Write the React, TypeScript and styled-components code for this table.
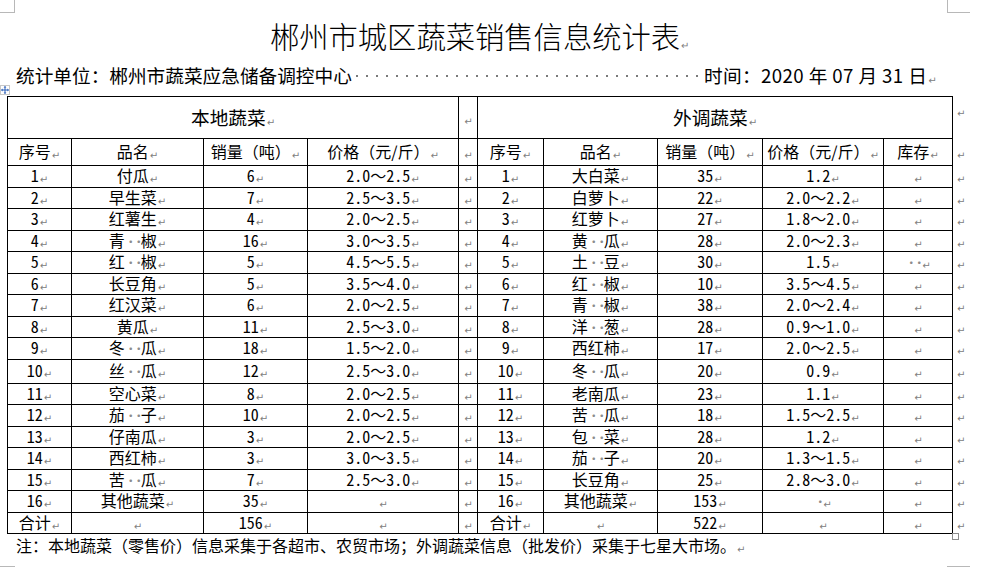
import styled, { createGlobalStyle } from 'styled-components';

const GlobalStyle = createGlobalStyle`
    html, body {
        margin: 0;
        padding: 0;
        background: #fff;
    }
    body {
        width: 985px;
        height: 568px;
        overflow: hidden;
        color: #000;
        font-family: "Noto Sans CJK SC", "Noto Sans", sans-serif;
    }
`;

const Page = styled.div`
    position: relative;
    width: 985px;
    height: 568px;
    box-sizing: border-box;
    padding-left: 7px;
`;

const Sheet = styled.div`
    width: 945px;
`;

const CornerMark = styled.div<{ $left: number; $top: number; $w: number; $h: number; $sides: string }>`
    position: absolute;
    left: ${(p) => p.$left}px;
    top: ${(p) => p.$top}px;
    width: ${(p) => p.$w}px;
    height: ${(p) => p.$h}px;
    box-sizing: border-box;
    border: 0 solid #b8b8b8;
    ${(p) => p.$sides}
`;

const Title = styled.h1`
    margin: 0;
    padding-top: 16px;
    height: 38px;
    font-size: 29.3px;
    font-weight: 300;
    line-height: 38px;
    text-align: center;
    white-space: nowrap;
`;

const MetaLine = styled.div`
    display: flex;
    align-items: center;
    height: 28px;
    margin-top: 7px;
    padding: 0 15px 0 9px;
    font-size: 18.67px;
    line-height: 28px;
    white-space: nowrap;
`;

const MetaDate = styled.span`
    letter-spacing: 0.4px;
`;

const Leader = styled.span`
    flex: 1;
    height: 4px;
    margin: 2px 0 0 0;
    background-image: radial-gradient(circle, #7a7a7a 1.1px, transparent 1.5px);
    background-size: 10px 4px;
    background-repeat: repeat-x;
`;

const TableWrap = styled.div`
    position: relative;
    margin-top: 7px;
`;

const MoveHandle = styled.div`
    position: absolute;
    left: -7px;
    top: -11px;
    width: 8px;
    height: 8px;
    border: 1px solid #c8c8c8;
    background: #fff;
    display: flex;
    align-items: center;
    justify-content: center;
`;

const ResizeGrip = styled.div`
    position: absolute;
    left: 945px;
    top: 437px;
    width: 5px;
    height: 5px;
    border: 1px solid #8c8c8c;
    background: #fff;
`;

const Grid = styled.table`
    border-collapse: collapse;
    table-layout: fixed;
    width: 965px;
    font-size: 16px;
`;

const Row = styled.tr<{ $h: number }>`
    height: ${(p) => p.$h}px;
`;

const Cell = styled.td<{ $big?: boolean }>`
    border: 1px solid #000;
    padding: 0;
    text-align: center;
    vertical-align: middle;
    white-space: nowrap;
    font-size: ${(p) => (p.$big ? '18.67px' : '16px')};
    line-height: 1;
`;

const EndCell = styled.td<{ $top?: boolean }>`
    border: none;
    padding: ${(p) => (p.$top ? '4px 0 0 3px' : '0 0 0 3px')};
    text-align: left;
    vertical-align: ${(p) => (p.$top ? 'top' : 'middle')};
    line-height: 1;
`;

const Mark = styled.span`
    color: #808080;
    font-family: "DejaVu Sans", sans-serif;
    font-size: 10px;
    line-height: 1;
    margin-left: 1px;
    vertical-align: -1px;
`;

const Num = styled.span`
    font-feature-settings: "hwid";
`;

const Blank = styled.span`
    display: inline-block;
    width: 8px;
    text-align: center;
    color: #8c8c8c;
    font-size: 12px;
    line-height: 1;
`;

const Note = styled.div`
    padding-left: 9px;
    font-size: 16px;
    line-height: 22px;
    white-space: nowrap;
`;

// split a cell text into runs: spaces become dots, digits take half-width forms
function Txt({ s }: { s: string }) {
    const parts = s.match(/ |[0-9.]+|[^ 0-9.]+/g) || [];
    return (
        <>
            {parts.map((p, i) =>
                p === ' ' ? <Blank key={i}>·</Blank> : /^[0-9.]+$/.test(p) ? <Num key={i}>{p}</Num> : p,
            )}
            <Mark>↵</Mark>
        </>
    );
}

const widths = [64, 132, 104, 151, 19, 66, 114, 105, 121, 69, 20];

const local: string[][] = [
    ['1', '付瓜', '6', '2.0～2.5'],
    ['2', '早生菜', '7', '2.5～3.5'],
    ['3', '红薯生', '4', '2.0～2.5'],
    ['4', '青  椒', '16', '3.0～3.5'],
    ['5', '红  椒', '5', '4.5～5.5'],
    ['6', '长豆角', '5', '3.5～4.0'],
    ['7', '红汉菜', '6', '2.0～2.5'],
    ['8', '黄瓜', '11', '2.5～3.0'],
    ['9', '冬  瓜', '18', '1.5～2.0'],
    ['10', '丝  瓜', '12', '2.5～3.0'],
    ['11', '空心菜', '8', '2.0～2.5'],
    ['12', '茄  子', '10', '2.0～2.5'],
    ['13', '仔南瓜', '3', '2.0～2.5'],
    ['14', '西红柿', '3', '3.0～3.5'],
    ['15', '苦  瓜', '7', '2.5～3.0'],
    ['16', '其他蔬菜', '35', ''],
    ['合计', '', '156', ''],
];

const outside: string[][] = [
    ['1', '大白菜', '35', '1.2', ''],
    ['2', '白萝卜', '22', '2.0～2.2', ''],
    ['3', '红萝卜', '27', '1.8～2.0', ''],
    ['4', '黄  瓜', '28', '2.0～2.3', ''],
    ['5', '土  豆', '30', '1.5', '  '],
    ['6', '红  椒', '10', '3.5～4.5', ''],
    ['7', '青  椒', '38', '2.0～2.4', ''],
    ['8', '洋  葱', '28', '0.9～1.0', ''],
    ['9', '西红柿', '17', '2.0～2.5', ''],
    ['10', '冬  瓜', '20', '0.9', ''],
    ['11', '老南瓜', '23', '1.1', ''],
    ['12', '苦  瓜', '18', '1.5～2.5', ''],
    ['13', '包  菜', '28', '1.2', ''],
    ['14', '茄  子', '20', '1.3～1.5', ''],
    ['15', '长豆角', '25', '2.8～3.0', ''],
    ['16', '其他蔬菜', '153', ' ', ''],
    ['合计', '', '522', '', ''],
];

const heads = ['序号', '品名', '销量（吨）', '价格（元/斤）'];

function App() {
    return (
        <Page>
            <GlobalStyle />
            <CornerMark $left={0} $top={0} $w={15} $h={13} $sides="border-right-width:1px;border-bottom-width:1px;" />
            <CornerMark $left={947} $top={0} $w={23} $h={13} $sides="border-left-width:1px;border-bottom-width:1px;" />
            <CornerMark $left={0} $top={566} $w={15} $h={2} $sides="border-top-width:1px;" />
            <CornerMark $left={947} $top={566} $w={23} $h={2} $sides="border-top-width:1px;" />
            <Sheet>
                <Title>
                    郴州市城区蔬菜销售信息统计表<Mark>↵</Mark>
                </Title>
                <MetaLine>
                    <span>统计单位：郴州市蔬菜应急储备调控中心</span>
                    <Leader />
                    <MetaDate>
                        时间：2020 年 07 月 31 日<Mark>↵</Mark>
                    </MetaDate>
                </MetaLine>
                <TableWrap>
                    <MoveHandle>
                        <svg width="8" height="8" viewBox="0 0 8 8">
                            <path d="M4 0.5V7.5M0.5 4H7.5" stroke="#2b5fb8" strokeWidth="1" />
                            <path d="M4 0L2.6 1.6H5.4ZM4 8L2.6 6.4H5.4ZM0 4L1.6 2.6V5.4ZM8 4L6.4 2.6V5.4Z" fill="#2b5fb8" />
                        </svg>
                    </MoveHandle>
                    <Grid>
                        <colgroup>
                            {widths.map((w, i) => (
                                <col key={i} style={{ width: w }} />
                            ))}
                        </colgroup>
                        <tbody>
                            <Row $h={42}>
                                <Cell $big colSpan={4}>
                                    <Txt s="本地蔬菜" />
                                </Cell>
                                <Cell>
                                    <Txt s="" />
                                </Cell>
                                <Cell $big colSpan={5}>
                                    <Txt s="外调蔬菜" />
                                </Cell>
                                <EndCell $top>
                                    <Txt s="" />
                                </EndCell>
                            </Row>
                            <Row $h={27}>
                                {heads.map((h) => (
                                    <Cell key={'l' + h}>
                                        <Txt s={h} />
                                    </Cell>
                                ))}
                                <Cell>
                                    <Txt s="" />
                                </Cell>
                                {heads.map((h) => (
                                    <Cell key={'r' + h}>
                                        <Txt s={h} />
                                    </Cell>
                                ))}
                                <Cell>
                                    <Txt s="库存" />
                                </Cell>
                                <EndCell>
                                    <Txt s="" />
                                </EndCell>
                            </Row>
                            {local.map((l, i) => (
                                <Row key={i} $h={i === 9 ? 24 : 21.5}>
                                    {l.map((v, j) => (
                                        <Cell key={'l' + j}>
                                            <Txt s={v} />
                                        </Cell>
                                    ))}
                                    <Cell>
                                        <Txt s="" />
                                    </Cell>
                                    {outside[i].map((v, j) => (
                                        <Cell key={'r' + j}>
                                            <Txt s={v} />
                                        </Cell>
                                    ))}
                                    <EndCell>
                                        <Txt s="" />
                                    </EndCell>
                                </Row>
                            ))}
                        </tbody>
                    </Grid>
                    <ResizeGrip />
                </TableWrap>
                <Note>
                    注：本地蔬菜（零售价）信息采集于各超市、农贸市场；外调蔬菜信息（批发价）采集于七星大市场。<Mark>↵</Mark>
                </Note>
            </Sheet>
        </Page>
    );
}

export default App;
